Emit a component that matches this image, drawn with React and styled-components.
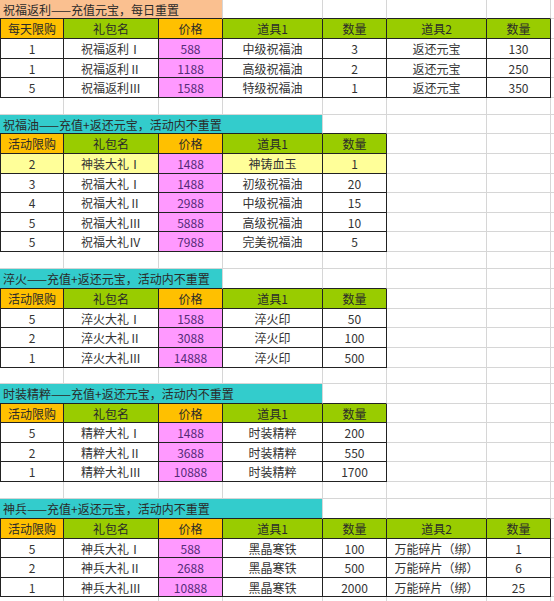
import React from "react";
import styled, {createGlobalStyle} from "styled-components";

const GOLD = "#ffc000";
const GREEN = "#99cc00";
const PEACH = "#fac090";
const TEAL = "#33cccc";
const PINK = "#ff99ff";
const YELLOW = "#ffff99";
const DARK = "#222";
const GRID = "#d6d6d6";

const GlobalStyle = createGlobalStyle`
    html, body {
        margin: 0;
        padding: 0;
        background: #fff;
    }
    body {
        font-family: "Noto Sans CJK SC", "Microsoft YaHei", "Noto Sans", sans-serif;
        font-size: 12px;
        color: #333;
    }
`;

const Sheet = styled.div`
    width: 554px;
    overflow: hidden;
`;

const Row = styled.div`
    display: grid;
    grid-template-columns: 64px 95px 64px 100px 64px 100px 64px 1fr;
    height: ${p => p.$h}px;
`;

const Cell = styled.div`
    box-sizing: border-box;
    display: flex;
    align-items: center;
    justify-content: center;
    white-space: nowrap;
    overflow: hidden;
    background: ${p => p.$bg || "#fff"};
    color: ${p => p.$color || "#333"};
    border-right: 1px solid ${p => p.$right || GRID};
    border-bottom: 1px solid ${p => p.$bottom || GRID};
    border-left: ${p => p.$left ? `1px solid ${DARK}` : "none"};
`;

const TitleCell = styled(Cell)`
    grid-column: span ${p => p.$span};
    justify-content: flex-start;
    padding-left: 3px;
    color: #2a2a2a;
`;

const Filler = styled.div`
    box-sizing: border-box;
    border-bottom: 1px solid ${GRID};
`;

const sections = [
    {
        title: "祝福返利——充值元宝，每日重置",
        titleBg: PEACH,
        span: 3,
        head: ["每天限购", "礼包名", "价格", "道具1", "数量", "道具2", "数量"],
        rows: [
            ["1", "祝福返利Ⅰ", "588", "中级祝福油", "3", "返还元宝", "130"],
            ["1", "祝福返利Ⅱ", "1188", "高级祝福油", "2", "返还元宝", "250"],
            ["5", "祝福返利Ⅲ", "1588", "特级祝福油", "1", "返还元宝", "350"],
        ],
        heights: [19, 20, 20, 19, 20],
        gap: 17,
    },
    {
        title: "祝福油——充值+返还元宝，活动内不重置",
        titleBg: TEAL,
        span: 4,
        head: ["活动限购", "礼包名", "价格", "道具1", "数量"],
        rows: [
            ["2", "神装大礼Ⅰ", "1488", "神铸血玉", "1"],
            ["3", "祝福大礼Ⅰ", "1488", "初级祝福油", "20"],
            ["4", "祝福大礼Ⅱ", "2988", "中级祝福油", "15"],
            ["5", "祝福大礼Ⅲ", "5888", "高级祝福油", "10"],
            ["5", "祝福大礼Ⅳ", "7988", "完美祝福油", "5"],
        ],
        highlight: [0],
        heights: [19, 20, 20, 19, 20, 19, 20],
        gap: 17,
    },
    {
        title: "淬火——充值+返还元宝，活动内不重置",
        titleBg: TEAL,
        span: 3,
        head: ["活动限购", "礼包名", "价格", "道具1", "数量"],
        rows: [
            ["5", "淬火大礼Ⅰ", "1588", "淬火印", "50"],
            ["2", "淬火大礼Ⅱ", "3088", "淬火印", "100"],
            ["1", "淬火大礼Ⅲ", "14888", "淬火印", "500"],
        ],
        heights: [20, 20, 19, 20, 20],
        gap: 16,
    },
    {
        title: "时装精粹——充值+返还元宝，活动内不重置",
        titleBg: TEAL,
        span: 4,
        head: ["活动限购", "礼包名", "价格", "道具1", "数量"],
        rows: [
            ["5", "精粹大礼Ⅰ", "1488", "时装精粹", "200"],
            ["2", "精粹大礼Ⅱ", "3688", "时装精粹", "550"],
            ["1", "精粹大礼Ⅲ", "10888", "时装精粹", "1700"],
        ],
        heights: [20, 19, 20, 19, 20],
        gap: 17,
    },
    {
        title: "神兵——充值+返还元宝，活动内不重置",
        titleBg: TEAL,
        span: 4,
        head: ["活动限购", "礼包名", "价格", "道具1", "数量", "道具2", "数量"],
        rows: [
            ["5", "神兵大礼Ⅰ", "588", "黑晶寒铁", "100", "万能碎片（绑）", "1"],
            ["2", "神兵大礼Ⅱ", "2688", "黑晶寒铁", "500", "万能碎片（绑）", "6"],
            ["1", "神兵大礼Ⅲ", "10888", "黑晶寒铁", "2000", "万能碎片（绑）", "25"],
        ],
        heights: [20, 20, 19, 20, 19],
        gap: 20,
    },
];

const COLS = 7;
// 表头颜色: 1,3列金色, 其余绿色
const headBg = (i) => (i === 0 || i === 2 ? GOLD : GREEN);

function BlankRow({h}) {
    return <Row $h={h}>
        {Array.from({length: COLS}).map((_, i) => <Cell key={i}/>)}
        <Filler/>
    </Row>
}

function Section({s}) {
    const n = s.head.length;
    const [titleH, headH, ...rowH] = s.heights;

    return <>
        <Row $h={titleH}>
            <TitleCell $span={s.span} $bg={s.titleBg} $bottom={DARK}>{s.title}</TitleCell>
            {Array.from({length: COLS - s.span}).map((_, i) => (
                <Cell key={i} $bottom={i + s.span < n ? DARK : GRID}/>
            ))}
            <Filler/>
        </Row>
        <Row $h={headH}>
            {s.head.map((el, i) => (
                <Cell key={i} $bg={headBg(i)} $right={DARK} $bottom={DARK} $left={i === 0} $color="#2a2a2a">{el}</Cell>
            ))}
            {Array.from({length: COLS - n}).map((_, i) => <Cell key={"e" + i}/>)}
            <Filler/>
        </Row>
        {s.rows.map((r, ri) => {
            const hl = s.highlight && s.highlight.includes(ri);
            return <Row $h={rowH[ri]} key={ri}>
                {r.map((el, i) => (
                    <Cell key={i}
                          $bg={i === 2 ? PINK : hl ? YELLOW : "#fff"}
                          $color={i === 2 ? "#552b78" : "#333"}
                          $right={DARK} $bottom={DARK} $left={i === 0}>{el}</Cell>
                ))}
                {Array.from({length: COLS - n}).map((_, i) => <Cell key={"e" + i}/>)}
                <Filler/>
            </Row>
        })}
        <BlankRow h={s.gap}/>
    </>
}

export default function App() {
    return <>
        <GlobalStyle/>
        <Sheet>
            {sections.map((s, i) => <Section s={s} key={i}/>)}
        </Sheet>
    </>
}
